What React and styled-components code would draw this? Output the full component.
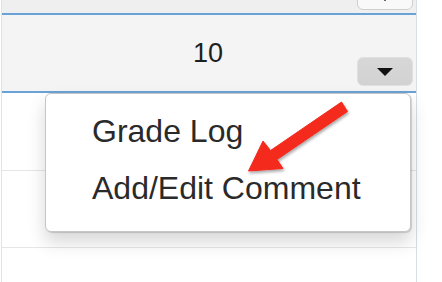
import React from "react";
import styled, { createGlobalStyle } from "styled-components";

const Global = createGlobalStyle`
  html, body { margin: 0; padding: 0; background: #ffffff; }
  body { font-family: "Liberation Sans", Arial, Helvetica, sans-serif; width: 442px; height: 282px; overflow: hidden; }
`;

const Page = styled.div`
  position: relative;
  width: 442px;
  height: 282px;
  background: #fff;
`;

const Table = styled.div`
  width: 414px;
  height: 282px;
  display: flex;
  flex-direction: column;
  border-left: 1px solid #e2e2e2;
  border-right: 1px solid #d6dde4;
  margin-left: 1px;
`;

const Row = styled.div`
  position: relative;
  flex: none;
  height: ${(p) => p.$h}px;
  background: ${(p) => p.$bg || "#fff"};
  border-bottom: ${(p) => p.$line || "none"};
  display: flex;
  align-items: flex-start;
  justify-content: center;
  box-sizing: border-box;
`;

const TopButton = styled.div`
  position: absolute;
  right: 3px;
  top: -10px;
  width: 54px;
  height: 18px;
  border: 1px solid #cfcfcf;
  border-radius: 6px;
  background: #f9f9f9;
  &::after {
    content: "";
    position: absolute;
    bottom: 8px;
    left: 26px;
    width: 2px;
    height: 1px;
    background: #666;
  }
`;

const Value = styled.span`
  font-size: 27px;
  line-height: 27px;
  color: #1f1f1f;
  padding-top: 25px;
  padding-right: 2px;
`;

const CaretButton = styled.div`
  position: absolute;
  right: 3px;
  top: 42px;
  width: 54px;
  height: 27px;
  border: 1px solid #e0e0e0;
  border-radius: 6px;
  background: linear-gradient(#d7d7d7, #d2d2d2);
  display: flex;
  align-items: center;
  justify-content: center;
`;

const Caret = styled.span`
  width: 0;
  height: 0;
  border-left: 8px solid transparent;
  border-right: 8px solid transparent;
  border-top: 8px solid #111;
  margin-top: 1px;
`;

const Menu = styled.div`
  position: absolute;
  left: 45px;
  top: 93px;
  width: 366px;
  height: 139px;
  box-sizing: border-box;
  background: #fff;
  border: 1px solid #c6c6c6;
  border-radius: 6px;
  box-shadow: 1px 1px 1px rgba(0,0,0,0.15), 0 10px 18px rgba(0,0,0,0.16);
  padding: 9px 0 0 46px;
  display: flex;
  flex-direction: column;
`;

const MenuItem = styled.div`
  font-size: 32px;
  line-height: 57px;
  color: #2a2a2a;
  white-space: nowrap;
`;

const Arrow = styled.svg`
  position: absolute;
  left: 0;
  top: 0;
  overflow: visible;
  pointer-events: none;
`;

export default function App() {
  return (
    <>
      <Global />
      <Page>
        <Table>
          <Row $h={15} $bg="#efefef" $line="2px solid #68a2d6">
            <TopButton />
          </Row>
          <Row $h={78} $bg="#f4f4f4" $line="2px solid #68a2d6">
            <Value>10</Value>
            <CaretButton>
              <Caret />
            </CaretButton>
          </Row>
          <Row $h={78} $line="1px solid #e6e6e6" />
          <Row $h={77} $line="1px solid #e6e6e6" />
          <Row $h={34} />
        </Table>
        <Menu>
          <MenuItem>Grade Log</MenuItem>
          <MenuItem>Add/Edit Comment</MenuItem>
        </Menu>
        <Arrow width="442" height="282" viewBox="0 0 442 282">
          <defs>
            <filter id="sh" x="-20%" y="-20%" width="140%" height="140%">
              <feDropShadow dx="1" dy="2" stdDeviation="1.6" floodColor="#000" floodOpacity="0.35" />
            </filter>
          </defs>
          <polygon
            filter="url(#sh)"
            fill="#f42a1e"
            strokeLinejoin="round"
            stroke="#f42a1e"
            strokeWidth="1"
            points="341.5,102 347.5,111.5 277,159.5 283,168.5 248.5,171 263,141 270.5,150.5"
          />
        </Arrow>
      </Page>
    </>
  );
}
